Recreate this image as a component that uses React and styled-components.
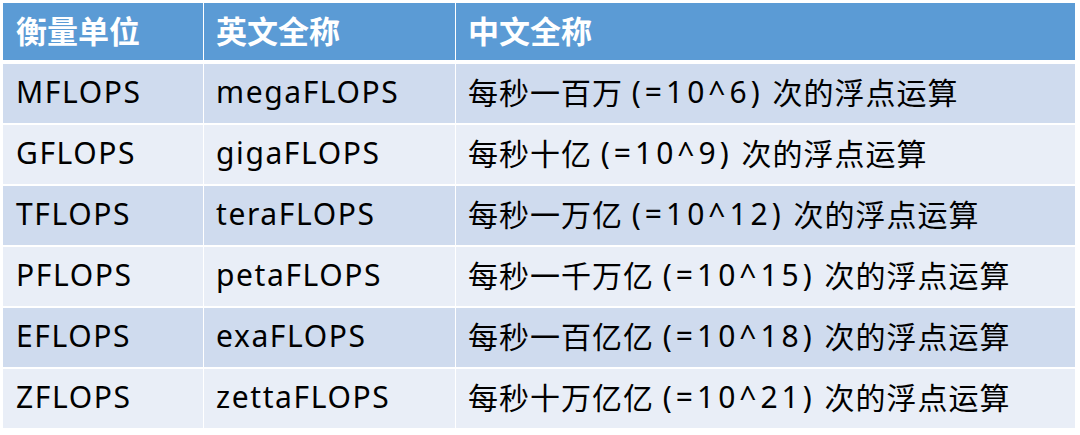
import React from 'react';
import styled, { createGlobalStyle } from 'styled-components';

const GlobalStyle = createGlobalStyle`
  html, body {
    margin: 0;
    padding: 0;
    background: #ffffff;
  }
`;

const Page = styled.div`
  padding: 3px 5px 0 3px;
  font-family: "Noto Sans", "Noto Sans CJK SC", sans-serif;
`;

const Table = styled.div`
  display: grid;
  grid-template-columns: 200px 251px 1fr;
  column-gap: 1px;
  row-gap: 2px;
  width: 1072px;
`;

const HeadCell = styled.div`
  height: 57px;
  margin-bottom: 2px;
  padding: 0 12px 4px ${p => (p.first ? 13 : 12)}px;
  background: #5b9bd5;
  color: #ffffff;
  font-family: "Noto Sans CJK SC", sans-serif;
  font-weight: 700;
  font-size: 31px;
  display: flex;
  align-items: center;
  box-sizing: border-box;
`;

const Cell = styled.div`
  height: 59px;
  padding: 0 12px 5px ${p => (p.first ? 13 : 12)}px;
  box-sizing: border-box;
  background: ${p => (p.odd ? '#cfdbee' : '#e9eef7')};
  color: #000000;
  font-size: 30px;
  letter-spacing: ${p => (p.term ? 1.6 : 1)}px;
  display: flex;
  align-items: center;
  white-space: pre;
`;

const Expr = styled.span`
  letter-spacing: 4px;
`;

const rows = [
  ['MFLOPS', 'megaFLOPS', '每秒一百万', '6'],
  ['GFLOPS', 'gigaFLOPS', '每秒十亿', '9'],
  ['TFLOPS', 'teraFLOPS', '每秒一万亿', '12'],
  ['PFLOPS', 'petaFLOPS', '每秒一千万亿', '15'],
  ['EFLOPS', 'exaFLOPS', '每秒一百亿亿', '18'],
  ['ZFLOPS', 'zettaFLOPS', '每秒十万亿亿', '21'],
];

const App = () => {
  return (
    <Page>
      <GlobalStyle />
      <Table>
        <HeadCell first>衡量单位</HeadCell>
        <HeadCell>英文全称</HeadCell>
        <HeadCell>中文全称</HeadCell>
        {rows.map(([unit, name, amount, power], i) => {
          const odd = i % 2 === 0;
          return (
            <React.Fragment key={unit}>
              <Cell odd={odd} first term>
                {unit}
              </Cell>
              <Cell odd={odd} term>
                {name}
              </Cell>
              <Cell odd={odd}>
                {amount} <Expr>(=10^{power})</Expr> 次的浮点运算
              </Cell>
            </React.Fragment>
          );
        })}
      </Table>
    </Page>
  );
};

export default App;
